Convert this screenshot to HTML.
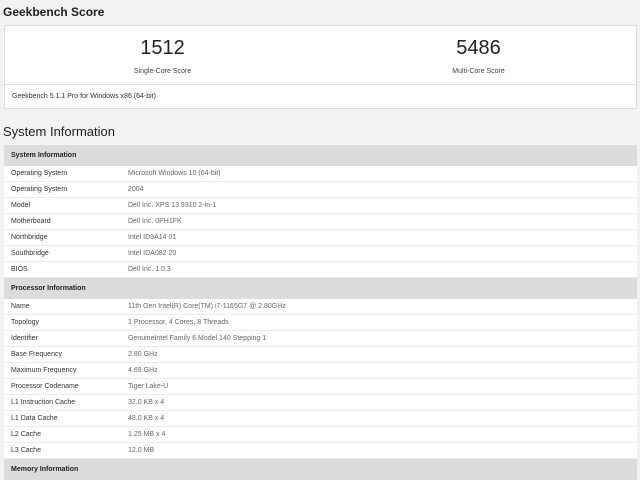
<!DOCTYPE html>
<html><head><style>
body{margin:0;background:#f2f2f2;font-family:"Liberation Sans",sans-serif;color:#333;width:640px;height:466px;overflow:hidden;position:relative}
.h{position:absolute;left:3px;font-weight:bold;color:#222}
.card{position:absolute;left:4px;top:25px;width:631px;height:82px;background:#fff;border:1px solid #ddd;border-radius:2px}
.sc{position:absolute;top:0;width:315px;text-align:center}
.num{font-size:20px;margin-top:10px;color:#222;line-height:24px}
.lbl{font-size:7px;color:#444;margin-top:8px}
.foot{position:absolute;left:0;right:0;top:58px;border-top:1px solid #e3e3e3;font-size:7px;padding:8px 0 0 7px;color:#333}
table{position:absolute;left:4px;top:145px;width:633px;border-collapse:collapse;background:#fff;font-size:7px}
td{height:15px;border-bottom:1px solid #ececec;padding:0 0 0 7px;color:#333}
td.v{color:#666;padding-left:0}
tr.hd td{background:#dcdcdc;height:21px;font-weight:bold;color:#222;border:none}
</style></head><body>
<div class="h" style="top:5px;font-size:12px">Geekbench Score</div>
<div class="card">
<div class="sc" style="left:0"><div class="num">1512</div><div class="lbl">Single-Core Score</div></div>
<div class="sc" style="left:316px"><div class="num">5486</div><div class="lbl">Multi-Core Score</div></div>
<div class="foot">Geekbench 5.1.1 Pro for Windows x86 (64-bit)</div>
</div>
<div class="h" style="top:124px;font-size:13px;font-weight:normal;color:#222">System Information</div>
<table>
<tr class="hd"><td colspan="2">System Information</td></tr>
<tr><td style="width:117px">Operating System</td><td class="v">Microsoft Windows 10 (64-bit)</td></tr>
<tr><td>Operating System</td><td class="v">2004</td></tr>
<tr><td>Model</td><td class="v">Dell Inc. XPS 13 9310 2-in-1</td></tr>
<tr><td>Motherboard</td><td class="v">Dell Inc. 0PH1FK</td></tr>
<tr><td>Northbridge</td><td class="v">Intel ID9A14 01</td></tr>
<tr><td>Southbridge</td><td class="v">Intel IDA082 20</td></tr>
<tr><td>BIOS</td><td class="v">Dell Inc. 1.0.3</td></tr>
<tr class="hd"><td colspan="2">Processor Information</td></tr>
<tr><td>Name</td><td class="v">11th Gen Intel(R) Core(TM) i7-1165G7 @ 2.80GHz</td></tr>
<tr><td>Topology</td><td class="v">1 Processor, 4 Cores, 8 Threads</td></tr>
<tr><td>Identifier</td><td class="v">GenuineIntel Family 6 Model 140 Stepping 1</td></tr>
<tr><td>Base Frequency</td><td class="v">2.80 GHz</td></tr>
<tr><td>Maximum Frequency</td><td class="v">4.69 GHz</td></tr>
<tr><td>Processor Codename</td><td class="v">Tiger Lake-U</td></tr>
<tr><td>L1 Instruction Cache</td><td class="v">32.0 KB x 4</td></tr>
<tr><td>L1 Data Cache</td><td class="v">48.0 KB x 4</td></tr>
<tr><td>L2 Cache</td><td class="v">1.25 MB x 4</td></tr>
<tr><td>L3 Cache</td><td class="v">12.0 MB</td></tr>
<tr class="hd"><td colspan="2">Memory Information</td></tr>
</table>
</body></html>
